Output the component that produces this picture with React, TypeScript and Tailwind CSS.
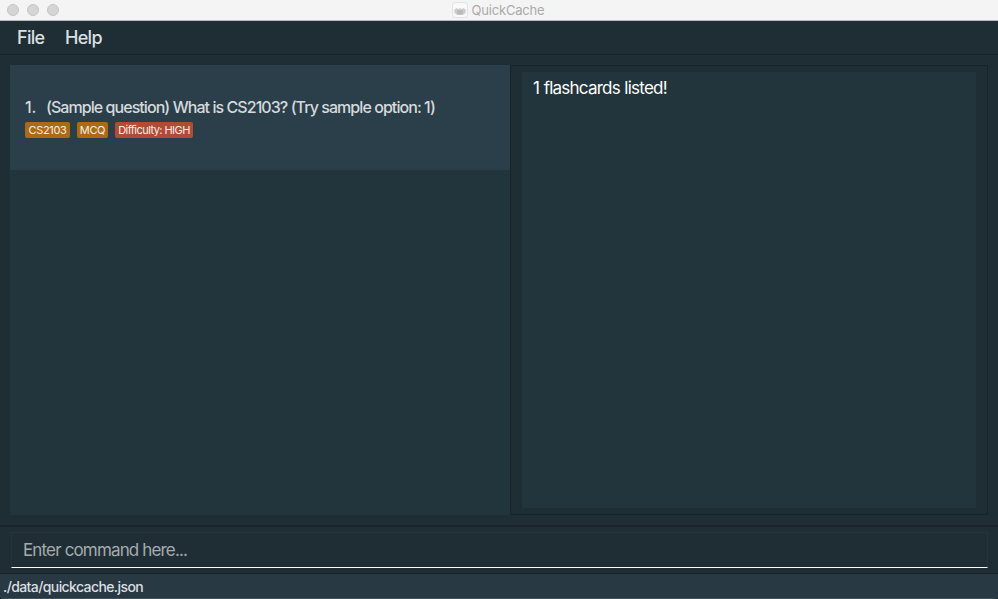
function TitleBar() {
  return (
    <header className="relative flex h-[21px] shrink-0 items-center justify-center border-b border-[#b5bbbb] bg-[#f4f4f4]">
      <div className="absolute top-[4px] left-[7px] flex gap-2">
        {[0, 1, 2].map((i) => (
          <span key={i} className="size-3 rounded-full border border-[#c5c5c5] bg-[#d5d5d5]" />
        ))}
      </div>
      <div className="mr-[2px] flex items-center gap-1">
        <svg width="16" height="16" viewBox="0 0 16 16">
          <rect x=".5" y=".5" width="15" height="15" rx="3" fill="#f9f9f9" stroke="#e2e2e2" />
          <path d="M2 8 4.500 6l1.800 1.200L8 6l1.700 1.200L11.500 6 14 8l-.5 3-2.500 2H5l-2.500-2z" fill="#cdcdcd" />
          <path d="M5 8h6v3.500L8 13l-3-1.500z" fill="#bababa" />
        </svg>
        <span className="text-[13px] leading-5 tracking-[-0.2px] text-[#aaaaaa]">QuickCache</span>
      </div>
    </header>
  );
}

function Tag({ label, className }: { label: string; className: string }) {
  return (
    <span className={`flex h-4 items-center justify-center rounded-[2px] text-[11px] whitespace-nowrap text-[#f4eee6] ${className}`}>
      {label}
    </span>
  );
}

export default function App() {
  return (
    <div className="flex h-[599px] w-[998px] flex-col overflow-hidden bg-[#1f2e35] font-['Inter','Liberation_Sans',sans-serif]">
      <TitleBar />
      <nav className="flex h-[34px] shrink-0 items-center border-b border-[#17242a] pl-[17px] text-[18px] font-medium text-[#dcdfe0]">
        <span className="w-12 tracking-[-0.7px]">File</span>
        <span className="tracking-[-0.7px]">Help</span>
      </nav>

      <main className="flex h-[470px] shrink-0 pt-[10px] pl-[10px]">
        <section className="h-[450px] w-[500px] bg-[#23353c]">
          <div className="flex h-[105px] flex-col bg-[#2a3f4a] pt-[32px] pl-[15px]">
            <div className="flex h-5 items-center text-[16px] font-medium whitespace-nowrap text-[#d6dadc]">
              <span className="w-[21px] tracking-[-0.1px]">1.</span>
              <span className="tracking-[-0.94px]">(Sample question) What is CS2103? (Try sample option: 1)</span>
            </div>
            <div className="mt-[5px] flex gap-[7px]">
              <Tag label="CS2103" className="w-[45px] bg-[#ac6a14] tracking-[-0.35px]" />
              <Tag label="MCQ" className="w-[31px] bg-[#ac6a14] tracking-[-0.3px]" />
              <Tag label="Difficulty: HIGH" className="w-[78px] bg-[#b04b38] tracking-[-0.55px]" />
            </div>
          </div>
        </section>
        <section className="h-[450px] w-[478px] border border-[#17242a] pt-[6px] pl-[11px]">
          <div className="h-[436px] w-[454px] bg-[#23353c] pt-[6px] pl-[11px] text-[17px] leading-5 tracking-[-0.77px] [word-spacing:0.5px] text-white">
            1 flashcards listed!
          </div>
        </section>
      </main>

      <div className="h-12 shrink-0 border-t-2 border-[#17242a] pt-[5px] pl-[11px]">
        <div className="flex h-9 w-[977px] items-center border border-[#23343b] border-b-white pt-[2px] pl-[11px] text-[17px] tracking-[-0.85px] text-[#a5abae]">
          Enter command here...
        </div>
      </div>

      <footer className="flex h-[26px] items-center rounded-b-[5px] border-t border-b border-t-[#17242a] border-b-[#41515b] bg-[#283944] pl-[3px] text-[14px] font-medium tracking-[-0.6px] text-[#dcdfe0]">
        ./data/quickcache.json
      </footer>
    </div>
  );
}
